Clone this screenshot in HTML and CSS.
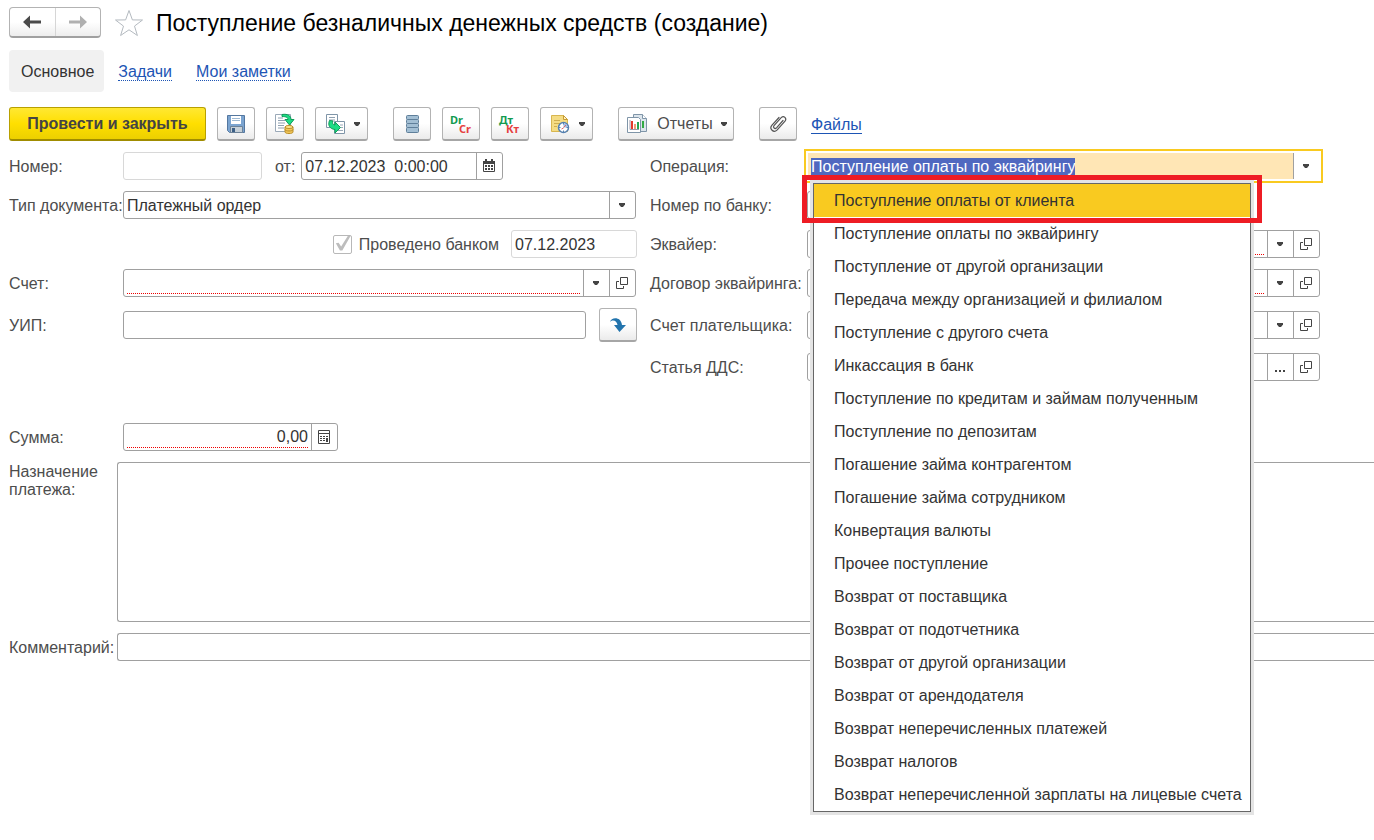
FILE: index.html
```html
<!DOCTYPE html>
<html lang="ru">
<head>
<meta charset="utf-8">
<meta name="viewport" content="width=device-width, initial-scale=1">
<title>Поступление безналичных денежных средств (создание)</title>
<link rel="stylesheet" href="styles.css">
</head>
<body>
<svg class="sprite" aria-hidden="true">
  <symbol id="caret" viewBox="0 0 6 4"><path d="M0 0h6v1.500L4 4H2L0 1.500z" fill="#444"/></symbol>
  <symbol id="open" viewBox="0 0 14 14"><path d="M5.500 1.500h7v7h-7zM4 5.500H1.500v7h7V10" fill="none" stroke="#444"/></symbol>
</svg>

<header class="header">
  <div class="history">
    <button type="button" aria-label="Назад"><svg width="18" height="14" viewBox="0 0 18 14"><path d="M0 7l7-6.500v5h11v3H7v5z" fill="#4a4a4a"/></svg></button>
    <button type="button" aria-label="Вперед"><svg width="18" height="14" viewBox="0 0 18 14"><path d="M18 7l-7-6.500v5H0v3h11v5z" fill="#b0b0b0"/></svg></button>
  </div>
  <button type="button" class="star" aria-label="В избранное"><svg width="30" height="28" viewBox="0 0 30 28"><path d="M15 1.500l3.400 9.400 10.100.1-8 6.100 2.900 9.400-8.400-5.700-8.400 5.700 2.900-9.400-8-6.100 10.100-.1z" fill="#fff" stroke="#b4bac0"/></svg></button>
  <h1>Поступление безналичных денежных средств (создание)</h1>
</header>

<nav class="tabs">
  <span class="tab-current">Основное</span>
  <a class="tab-link" href="#tasks">Задачи</a>
  <a class="tab-link" href="#notes">Мои заметки</a>
</nav>

<div class="toolbar">
  <div class="group">
    <button type="button" class="btn btn-primary">Провести и закрыть</button>
    <button type="button" class="btn btn-icon" aria-label="Записать"><svg width="24" height="24" viewBox="0 0 24 24"><path d="M3.500 3.500h17v17h-15l-2-2z" fill="#7ba4d0" stroke="#54779f"/><path d="M7 4h10v8H7z" fill="#fff"/><path d="M8 6.500h8M8 8.500h8" stroke="#9db9d3"/><path d="M6.500 14.500h12v6h-12z" fill="#c6d0d8" stroke="#6c8298"/><path d="M8 16h3v4H8z" fill="#3c5f86"/></svg></button>
    <button type="button" class="btn btn-icon" aria-label="Провести"><svg width="24" height="24" viewBox="0 0 24 24"><path d="M2.500 2.500h15v17h-15z" fill="#fff" stroke="#9aa9b8"/><path d="M5 6h5M5 8.500h7M5 11h7M5 13.500h6M5 16h6" stroke="#8fa0b0"/><path d="M9 2.500c6-1 9 1.500 9 5h3l-4.500 5.500L12 7.500h3c0-2-2-3-6-3z" fill="#1ddc84" stroke="#0f9b58"/><path d="M12 15v5c0 2 8 2 8 0v-5z" fill="#f4c95c" stroke="#b98d28"/><ellipse cx="16" cy="15" rx="4" ry="1.500" fill="#ffe794" stroke="#b98d28"/><path d="M12 17.500c0 2 8 2 8 0" fill="none" stroke="#b98d28"/></svg></button>
    <button type="button" class="btn btn-menu" aria-label="Создать на основании"><svg width="24" height="24" viewBox="0 0 24 24"><path d="M3.500 2.500h11v13h-11z" fill="#fff" stroke="#7f95a8"/><path d="M6 5.500h6M6 8h6" stroke="#8fa0b0"/><path d="M11.500 9.500h10v12h-10z" fill="#fff" stroke="#7f95a8"/><path d="M17 13h3M18 15.500h2M14 18.500h6" stroke="#9aa9b8"/><path d="M6.500 8.500L10 9c-1 2-.5 3.500 2 4v-3l5.500 5.500L12 21v-3.500c-5-.5-7.500-4-5.500-9z" fill="#1ddc84" stroke="#0f9b58"/></svg><svg class="caret"><use href="#caret"/></svg></button>
  </div>
  <div class="group">
    <button type="button" class="btn btn-icon" aria-label="Движения документа"><svg width="24" height="24" viewBox="0 0 24 24"><g fill="#a3bfd4" stroke="#5f7f9a"><rect x="6.500" y="3.500" width="12" height="4" rx="1"/><rect x="6.500" y="7.500" width="12" height="4" rx="1"/><rect x="6.500" y="11.500" width="12" height="4" rx="1"/><rect x="6.500" y="15.500" width="12" height="5" rx="1"/></g></svg></button>
    <button type="button" class="btn btn-icon" aria-label="Проводки Dr Cr"><svg class="ledger" width="24" height="24" viewBox="0 0 24 24"><text x="1" y="12" fill="#129a50">Dr</text><text x="10" y="21" fill="#e5403f">Cr</text></svg></button>
    <button type="button" class="btn btn-icon" aria-label="Проводки Дт Кт"><svg class="ledger" width="24" height="24" viewBox="0 0 24 24"><text x="1" y="12" fill="#129a50">Дт</text><text x="8" y="21" fill="#e5403f">Кт</text></svg></button>
    <button type="button" class="btn btn-menu" aria-label="Напоминания"><svg width="24" height="24" viewBox="0 0 24 24"><path d="M3.500 3.500h12l4 4v12h-16z" fill="#f4dc84" stroke="#d8b650"/><path d="M15.500 3.500v4h4z" fill="#fff3c0" stroke="#c79b35"/><path d="M6 8.500h6M6 11.500h6M6 14.500h3" stroke="#cfae4e"/><circle cx="15.500" cy="15.500" r="5" fill="#fff" stroke="#5580b0" stroke-width="1.500"/><path d="M15.500 15.500V11.500a4 4 0 0 1 4 4z" fill="#9fbfe6"/><path d="M15.500 11v1.500M15.500 18.500V20M11 15.500h1.500M18.500 15.500H20" stroke="#5580b0"/><path d="M15.500 15.500l2.500-2.500M15.500 16l-2 1" stroke="#d66"/></svg><svg class="caret"><use href="#caret"/></svg></button>
  </div>
  <div class="group">
    <button type="button" class="btn btn-reports"><svg width="24" height="24" viewBox="0 0 24 24"><path d="M8.500 2.500h9l4 4v13h-13z" fill="#dce5ec" stroke="#7f95a8"/><path d="M17.500 2.500v4h4" fill="#fff" stroke="#7f95a8"/><path d="M18 9v7" stroke="#3a4" stroke-width="2"/><path d="M2.500 5.500h11l2 2v13h-13z" fill="#fff" stroke="#7f95a8"/><path d="M5 8v9.500h9" fill="none" stroke="#99a"/><path d="M7 9v8" stroke="#e33a2d" stroke-width="2"/><path d="M10 12v5" stroke="#f09a78" stroke-width="2"/><path d="M13 10v7" stroke="#22a652" stroke-width="2"/></svg><span>Отчеты</span><svg class="caret"><use href="#caret"/></svg></button>
  </div>
  <div class="group">
    <button type="button" class="btn btn-icon" aria-label="Присоединенные файлы"><svg width="24" height="24" viewBox="0 0 24 24"><path d="M17 8.500l-6.500 7.300c-1.600 1.700-4-.4-2.500-2.200l7.200-8c2.600-2.600 6 .7 3.800 3.500l-7.800 8.700c-3.600 3.600-8.400-.8-5.200-4.600L13 5.500" fill="none" stroke="#555" stroke-width="1.200" stroke-linecap="round"/></svg></button>
    <a class="files-link" href="#files">Файлы</a>
  </div>
</div>

<main>
  <form class="form">
    <div class="row">
      <label class="label" for="number">Номер:</label>
      <div class="field field-off field-number"><input id="number" type="text" disabled></div>
      <label class="label-from" for="date">от:</label>
      <div class="field field-date"><input id="date" type="text" value="07.12.2023  0:00:00"><button type="button" aria-label="Выбрать дату"><svg width="14" height="14" viewBox="0 0 14 14"><path d="M1.500 2.500h11v10h-11z" fill="#fff" stroke="#444"/><path d="M1 2h12v3H1zM3 0h2v3H3zM9 0h2v3H9z" fill="#444"/><path d="M3 6h2v2H3zM6 6h2v2H6zM9 6h2v2H9zM3 9h2v2H3zM6 9h2v2H6zM9 9h2v2H9z" fill="#444"/></svg></button></div>
    </div>
    <div class="row row-right">
      <label class="label" for="operation">Операция:</label>
      <div class="combo">
        <div class="field field-active"><input id="operation" type="text" role="combobox" aria-expanded="true" aria-controls="operations" value="Поступление оплаты по эквайрингу"><button type="button" aria-label="Показать список"><svg class="caret"><use href="#caret"/></svg></button></div>
        <div class="menu">
          <ul id="operations" role="listbox">
            <li role="option" aria-selected="true" class="current">Поступление оплаты от клиента</li>
            <li role="option">Поступление оплаты по эквайрингу</li>
            <li role="option">Поступление от другой организации</li>
            <li role="option">Передача между организацией и филиалом</li>
            <li role="option">Поступление с другого счета</li>
            <li role="option">Инкассация в банк</li>
            <li role="option">Поступление по кредитам и займам полученным</li>
            <li role="option">Поступление по депозитам</li>
            <li role="option">Погашение займа контрагентом</li>
            <li role="option">Погашение займа сотрудником</li>
            <li role="option">Конвертация валюты</li>
            <li role="option">Прочее поступление</li>
            <li role="option">Возврат от поставщика</li>
            <li role="option">Возврат от подотчетника</li>
            <li role="option">Возврат от другой организации</li>
            <li role="option">Возврат от арендодателя</li>
            <li role="option">Возврат неперечисленных платежей</li>
            <li role="option">Возврат налогов</li>
            <li role="option">Возврат неперечисленной зарплаты на лицевые счета</li>
          </ul>
          <div class="marker"></div>
        </div>
      </div>
    </div>

    <div class="row">
      <label class="label" for="doctype">Тип документа:</label>
      <div class="field field-select"><select id="doctype"><option>Платежный ордер</option></select><span class="select-arrow"><svg class="caret"><use href="#caret"/></svg></span></div>
    </div>
    <div class="row row-right">
      <label class="label" for="banknum">Номер по банку:</label>
      <div class="field field-banknum"><input id="banknum" type="text"></div>
    </div>

    <div class="row row-bank">
      <label class="check"><input type="checkbox" checked disabled><span>Проведено банком</span></label>
      <div class="field field-off field-bankdate"><input type="text" value="07.12.2023" aria-label="Дата проведения банком" disabled></div>
    </div>
    <div class="row row-right">
      <label class="label" for="acquirer">Эквайер:</label>
      <div class="field required"><input id="acquirer" type="text"><button type="button" aria-label="Выбрать"><svg class="caret"><use href="#caret"/></svg></button><button type="button" aria-label="Открыть"><svg class="open"><use href="#open"/></svg></button></div>
    </div>

    <div class="row">
      <label class="label" for="account">Счет:</label>
      <div class="field required"><input id="account" type="text"><button type="button" aria-label="Выбрать"><svg class="caret"><use href="#caret"/></svg></button><button type="button" aria-label="Открыть"><svg class="open"><use href="#open"/></svg></button></div>
    </div>
    <div class="row row-right">
      <label class="label" for="contract">Договор эквайринга:</label>
      <div class="field required"><input id="contract" type="text"><button type="button" aria-label="Выбрать"><svg class="caret"><use href="#caret"/></svg></button><button type="button" aria-label="Открыть"><svg class="open"><use href="#open"/></svg></button></div>
    </div>

    <div class="row row-uip">
      <label class="label" for="uip">УИП:</label>
      <div class="field"><input id="uip" type="text"></div>
      <button type="button" class="btn btn-icon" aria-label="Заполнить"><svg width="18" height="16" viewBox="0 0 18 16"><path d="M1 5C2 0 12-1 13 8h4l-6.500 7L5 8h3.500C8 4 4 2 1 5z" fill="#2274ad"/></svg></button>
    </div>
    <div class="row row-right">
      <label class="label" for="payer">Счет плательщика:</label>
      <div class="field"><input id="payer" type="text"><button type="button" aria-label="Выбрать"><svg class="caret"><use href="#caret"/></svg></button><button type="button" aria-label="Открыть"><svg class="open"><use href="#open"/></svg></button></div>
    </div>

    <div class="row row-right">
      <label class="label" for="cashflow">Статья ДДС:</label>
      <div class="field"><input id="cashflow" type="text"><button type="button" aria-label="Выбрать"><svg width="12" height="12" viewBox="0 0 12 12"><path d="M1 9h2v2H1zM5 9h2v2H5zM9 9h2v2H9z" fill="#444"/></svg></button><button type="button" aria-label="Открыть"><svg class="open"><use href="#open"/></svg></button></div>
    </div>

    <div class="row row-sum">
      <label class="label" for="sum">Сумма:</label>
      <div class="field required field-sum"><input id="sum" type="text" value="0,00"><button type="button" aria-label="Калькулятор"><svg width="14" height="14" viewBox="0 0 14 14"><path d="M1.500 .5h11v13h-11zM1 3.500h12" fill="none" stroke="#444"/><path d="M3 6h2v1H3zM6 6h2v1H6zM9 6h2v1H9zM3 8h2v1H3zM6 8h2v1H6zM3 10h2v1H3zM6 10h2v1H6zM9 8h2v4H9z" fill="#444"/></svg></button></div>
    </div>
  </form>

  <div class="wide wide-purpose">
    <label for="purpose">Назначение платежа:</label>
    <textarea id="purpose"></textarea>
  </div>
  <div class="wide">
    <label for="comment">Комментарий:</label>
    <input id="comment" type="text">
  </div>
</main>
<script src="script.js"></script>
</body>
</html>
```

FILE: styles.css
```css
* { box-sizing: border-box; }

body {
  margin: 0;
  min-height: 100vh;
  padding: 7px 0 0 9px;
  background: #fff;
  color: #4d4d4d;
  font: 16px/18px "Liberation Sans", Arial, sans-serif;
}

button, input, select, textarea { font: inherit; color: inherit; }
button { padding: 0; cursor: pointer; }
svg { display: block; flex: none; }
.sprite { position: absolute; width: 0; height: 0; }
.caret { width: 6px; height: 4px; }
.open { width: 14px; height: 14px; }

/* Header */
.header { display: flex; align-items: center; height: 31px; }
.history {
  display: flex;
  width: 92px;
  height: 31px;
  border: 1px solid #b3b3b3;
  border-bottom: 2px solid #a0a0a0;
  border-radius: 4px;
  background: linear-gradient(#fff 50%, #ededed);
}
.history button {
  flex: 1;
  display: flex;
  align-items: center;
  justify-content: center;
  border: 0;
  background: none;
}
.history button + button { border-left: 1px solid #d6d6d6; }
.star { margin: 0 12px 0 13px; padding: 0; border: 0; background: none; }
h1 { margin: 0; color: #000; font-size: 23px; line-height: 28px; font-weight: 400; white-space: nowrap; }

/* Tabs */
.tabs { display: flex; align-items: center; height: 42px; margin-top: 12px; }
.tab-current {
  padding: 13px 10px 11px 12px;
  border-radius: 4px;
  background: #f1f1f1;
  color: #333;
}
.tab-link { margin: 2px 0 0 14px; border-bottom: 1px dotted #1d55b5; color: #1d55b5; line-height: 16px; text-decoration: none; }
.tab-link + .tab-link { margin-left: 24px; }

/* Toolbar */
.toolbar { display: flex; gap: 25px; margin-top: 15px; }
.group { display: flex; align-items: center; gap: 11px; }
.btn {
  display: flex;
  align-items: center;
  justify-content: center;
  flex: none;
  height: 34px;
  border: 1px solid #b3b3b3;
  border-bottom: 2px solid #a6a6a6;
  border-radius: 3px;
  background: linear-gradient(#fff 50%, #ebebeb);
}
.btn-icon { width: 38px; }
.btn-menu { width: 53px; gap: 7px; }
.btn-primary {
  width: 197px;
  border-color: #b8a000;
  border-bottom-color: #a08c00;
  background: linear-gradient(#ffe833, #ffdf00 50%, #ecd000);
  color: #444;
  font-weight: 700;
}
.btn-reports { width: 116px; gap: 8px; }
.ledger { font: 700 11px "Noto Sans", sans-serif; }
.files-link { margin: 2px 0 0 3px; border-bottom: 1px solid #1d55b5; color: #1d55b5; line-height: 16px; text-decoration: none; }

/* Document form */
.form {
  display: grid;
  grid-template-columns: minmax(0, 628fr) minmax(0, 670fr);
  gap: 11px 13px;
  margin: 11px 54px 0 0;
}
.row { display: flex; align-items: center; min-width: 0; padding-right: 1px; }
.row-right { grid-column: 2; padding-right: 0; }
.label { flex: none; width: 114px; padding-top: 2px; white-space: nowrap; }
.row-right .label { width: 157px; }
.field {
  display: flex;
  flex: 1;
  min-width: 0;
  height: 28px;
  border: 1px solid #a0a0a0;
  border-radius: 3px;
  background: #fff;
  color: #333;
}
.field input, .field select {
  flex: 1;
  min-width: 0;
  width: 0;
  padding: 2px 3px 0;
  border: 0;
  outline: 0;
  background: none;
  white-space: pre;
}
.field select { appearance: none; }
.field button, .select-arrow {
  display: flex;
  align-items: center;
  justify-content: center;
  flex: none;
  width: 26px;
  padding-right: 2px;
  border: 0;
  border-left: 1px solid #a0a0a0;
  background: none;
}
.field-off { border-color: #d8d8d8; }
.field-off input:disabled { color: #333; }
.field-number { flex: none; width: 139px; }
.label-from { margin: 0 6px 0 13px; padding-top: 2px; }
.field-date { flex: none; width: 202px; }
.field-banknum { flex: none; width: 300px; }
.required input { margin: 0 3px 2px; padding: 3px 0 0; border-bottom: 1px dotted #e00; }
.row-bank { justify-content: flex-end; padding-right: 0; }
.check { display: flex; align-items: center; gap: 7px; margin-right: 12px; }
.check span { padding-top: 2px; }
.check input {
  appearance: none;
  width: 19px;
  height: 19px;
  margin: 0;
  border: 1px solid #b8b8b8;
  border-radius: 2px;
}
.check input::before {
  content: "";
  display: block;
  width: 17px;
  height: 17px;
  background: #bdbdbd;
  clip-path: polygon(12% 46%, 28% 42%, 43% 64%, 84% 0, 100% 0, 50% 88%, 36% 88%);
}
.field-bankdate { flex: none; width: 126px; }
.row-uip { gap: 13px; padding-right: 0; }
.row-uip .label { margin-right: -13px; }
.row-sum { margin-top: 31px; }
.field-sum { flex: none; width: 215px; }
.field-sum input { text-align: right; }

/* Operation list */
.combo { position: relative; flex: 1; min-width: 0; }
.field-active { border-color: #fff; border-radius: 0; outline: 2px solid #f9ca20; outline-offset: 1px; }
.field-active input { background: #ffe6b5; }
.field-active input::selection { background: #5068c0; color: #fff; }
.menu { position: absolute; z-index: 1; top: 31px; left: 6px; }
.menu ul {
  margin: 0;
  padding: 0;
  border: 1px solid #666;
  box-shadow: 0 0 0 3px #e4e4e4;
  background: #fff;
  color: #333;
  list-style: none;
}
.menu li { padding: 8px 8px 7px 20px; white-space: nowrap; }
.menu .current { background: #f9ca20; }
.marker {
  position: absolute;
  top: -8px;
  left: -11px;
  right: -11px;
  height: 48px;
  border: 5px solid #ee1c24;
  pointer-events: none;
}

/* Full-width fields */
.wide { display: flex; align-items: center; margin-top: 11px; }
.wide label { flex: none; width: 108px; padding-top: 2px; }
.wide-purpose { align-items: flex-start; }
.wide-purpose label { padding-top: 1px; }
.wide textarea, .wide input {
  flex: 1;
  min-width: 0;
  height: 28px;
  padding: 0 4px;
  border: 1px solid #a0a0a0;
  border-right: 0;
  border-radius: 3px 0 0 3px;
  outline: 0;
}
.wide textarea { height: 160px; resize: none; }
```

FILE: script.js
```js
const operation = document.getElementById("operation");
operation.focus();
operation.select();
```
